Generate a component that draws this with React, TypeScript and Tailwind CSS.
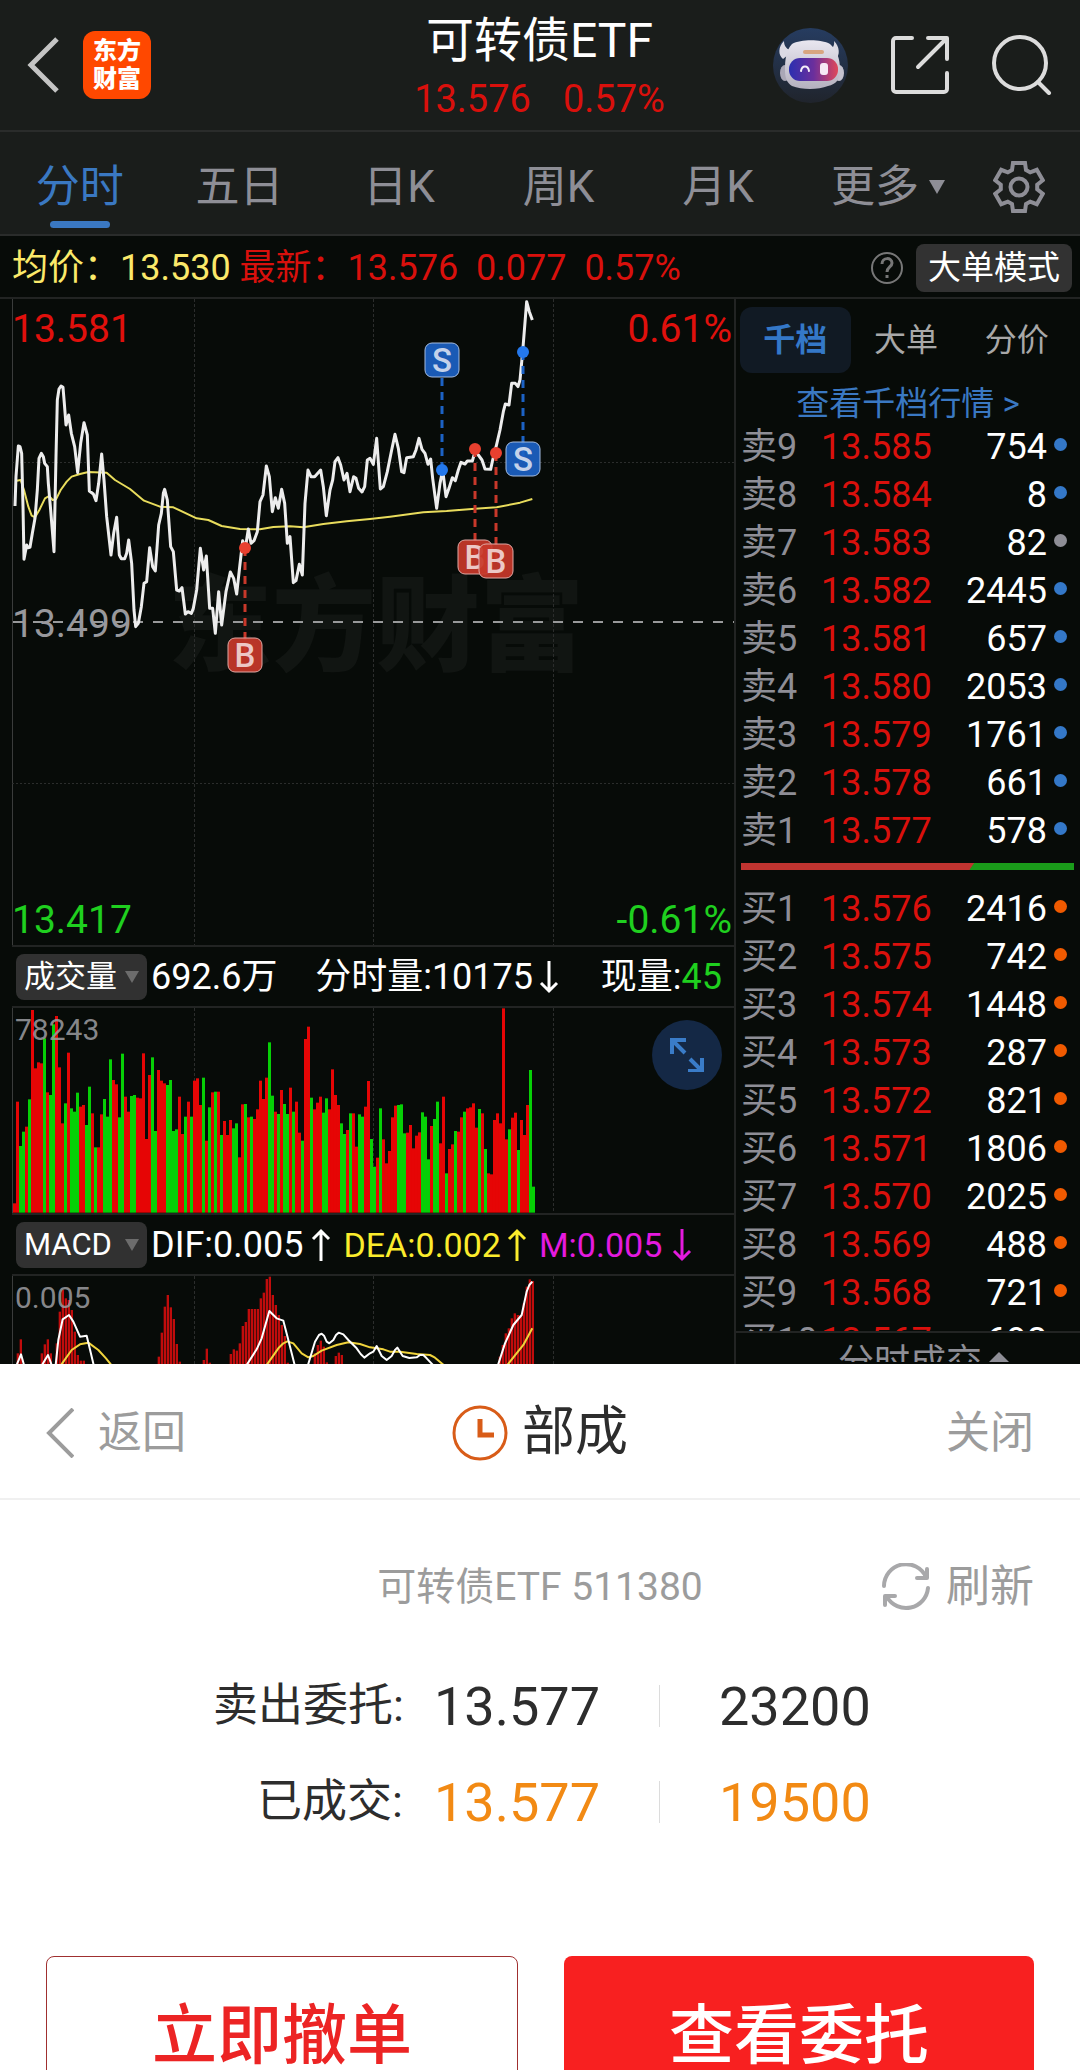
import { useState } from "react";

const PERIODS = ["分时", "五日", "日K", "周K", "月K"];
const BOOK_TABS = ["千档", "大单", "分价"];

// chart series are stored on a grid three times finer than the drawing
const PRICE =
  "45,648 48,560 55,468 60,470 65,490 69,650 72,808 80,765 84,773 90,772 97,730 105,685 112,600 117,505 124,490 130,500 134,520 142,530 145,580 152,660 162,785 168,500 172,330 177,297 183,288 189,292 193,340 198,405 206,375 214,430 224,470 233,548 242,460 252,398 262,435 268,603 280,612 288,632 296,580 305,492 312,570 320,680 333,795 341,730 350,682 358,795 364,806 374,806 380,790 386,750 395,820 402,960 407,1010 415,1000 424,950 432,880 440,875 449,773 458,830 466,843 476,705 484,670 490,610 494,598 502,630 512,770 520,785 530,900 538,903 546,893 556,972 564,965 574,970 580,955 590,900 601,775 611,840 619,798 629,955 638,955 646,1030 656,905 665,1005 678,905 691,846 701,865 710,912 718,840 728,752 736,775 745,717 753,760 762,752 772,725 780,635 789,615 799,528 808,560 817,665 826,623 835,655 845,598 854,640 862,760 870,740 880,878 888,872 898,823 907,855 915,640 924,540 933,560 944,560 962,540 970,590 979,677 990,600 998,570 1005,515 1014,503 1022,525 1032,570 1041,550 1050,605 1061,560 1068,565 1076,595 1086,606 1094,590 1102,510 1110,505 1120,523 1130,445 1141,597 1150,590 1162,545 1175,480 1185,433 1195,475 1205,545 1212,548 1220,503 1240,500 1248,480 1257,445 1266,478 1275,490 1284,523 1292,507 1298,565 1310,655 1320,580 1328,540 1338,620 1347,595 1357,563 1366,572 1375,540 1383,517 1395,522 1402,513 1417,513 1426,482 1435,495 1446,510 1455,537 1472,538 1478,510 1490,463 1500,420 1510,365 1516,342 1527,345 1535,280 1546,280 1554,290 1560,270 1568,185 1580,35 1588,65 1597,90";

const AVERAGE =
  "50,572 62,570 72,600 85,650 95,677 105,682 118,660 135,625 147,618 158,630 168,628 182,600 200,575 215,560 240,552 265,546 320,548 345,570 390,597 432,632 480,650 520,652 590,685 625,690 665,708 720,717 780,718 820,711 870,709 910,712 970,702 1040,694 1110,687 1170,680 1270,667 1340,663 1425,656 1490,652 1560,638 1597,627";

// r = up bar, g = down bar, the number is the top of the bar
const VOLUME =
  "r820 r515 g648 g605 r590 g508 r240 r415 r397 r400 g325 r487 g495 g283 r258 r412 r580 g520 r368 g535 g545 g488 r530 r525 g585 g470 r550 g652 r652 r553 g507 g560 g388 r450 r463 g562 g371 r500 r545 g498 g495 r503 r505 r370 r627 r435 g382 g603 r420 r452 r460 g465 g450 g603 g598 r500 r612 g560 r515 g560 r452 r445 r525 g443 r632 g532 r487 g485 r485 g615 r573 r615 r570 g595 g580 r682 r523 g522 r562 g560 r567 r538 r452 r507 r443 g337 g497 r545 g552 r480 g522 g552 r473 g545 r515 r608 g632 r327 r290 g503 r538 r518 r500 g548 g505 r538 r418 r495 r525 g580 g612 r600 g550 r550 r650 g553 g560 r530 r453 g627 g710 r683 g535 r628 r700 r663 r562 r527 g525 g523 g610 r608 r585 r655 r617 r607 g547 g560 g688 r588 g567 g515 r640 r500 g730 r657 r643 g603 r605 r562 g545 r535 r532 r520 r593 g537 r550 g657 r730 r733 r570 r550 r580 r235 r628 g598 r563 r548 g660 r570 r615 r525 g420 g770";

const MACD_BARS =
  "54,1270 63,1228 126,1270 135,1243 144,1228 153,1270 171,1240 180,1145 189,1080 198,1105 207,1110 216,1140 225,1205 234,1275 243,1292 252,1292 477,1280 486,1208 495,1130 504,1095 513,1132 522,1167 531,1242 540,1295 612,1290 621,1256 630,1298 693,1272 702,1258 711,1262 720,1240 729,1188 738,1176 747,1137 756,1137 765,1137 774,1137 783,1105 792,1088 801,1047 810,1040 819,1095 828,1125 837,1155 846,1185 855,1218 864,1298 945,1270 954,1245 963,1232 972,1250 981,1297 1008,1278 1017,1268 1026,1275 1500,1280 1509,1245 1518,1210 1527,1195 1536,1165 1545,1150 1554,1155 1563,1155 1572,1120 1581,1070 1590,1048 1599,1053";

const DIF = [
  "50,1305 63,1273 72,1305",
  "126,1305 144,1275 155,1305",
  "167,1305 175,1230 188,1168 207,1155 220,1175 240,1220 260,1217 268,1250 281,1305",
  "740,1305 770,1258 785,1225 808,1143 830,1165 850,1172 865,1230 884,1305",
  "924,1305 945,1235 957,1215 965,1211 972,1217 980,1235 988,1240 1000,1230 1008,1215 1016,1208 1030,1213 1045,1230 1070,1255 1082,1272 1093,1283 1110,1270 1120,1265 1130,1248 1145,1278 1160,1290 1175,1278 1185,1260 1192,1253 1208,1278 1228,1284 1250,1282 1260,1275 1270,1275 1280,1285 1299,1305",
  "1494,1305 1515,1240 1540,1185 1565,1155 1580,1085 1588,1065 1597,1055",
];

const DEA = [
  "183,1305 215,1260 240,1243 265,1238 295,1260 318,1285 334,1305",
  "800,1305 835,1255 850,1240 862,1234 880,1240 905,1270 925,1282 940,1278 965,1262 1010,1245 1045,1237 1080,1242 1110,1252 1150,1258 1170,1265 1200,1265 1250,1272 1290,1275 1305,1283 1331,1305",
  "1522,1305 1570,1245 1597,1195",
];

const MARKERS = [
  { side: "B", x: 245, y: 655, dot: 548 },
  { side: "S", x: 442, y: 360, dot: 470 },
  { side: "B", x: 475, y: 557, dot: 449 },
  { side: "B", x: 496, y: 561, dot: 453 },
  { side: "S", x: 523, y: 459, dot: 352 },
];

interface Level {
  label: string;
  price: string;
  amount: number;
  dot: string;
}

const BLUE = "bg-[#3478c8]";
const ORANGE = "bg-[#f05a00]";

const ASKS: Level[] = [
  { label: "卖9", price: "13.585", amount: 754, dot: BLUE },
  { label: "卖8", price: "13.584", amount: 8, dot: BLUE },
  { label: "卖7", price: "13.583", amount: 82, dot: "bg-[#8e8e96]" },
  { label: "卖6", price: "13.582", amount: 2445, dot: BLUE },
  { label: "卖5", price: "13.581", amount: 657, dot: BLUE },
  { label: "卖4", price: "13.580", amount: 2053, dot: BLUE },
  { label: "卖3", price: "13.579", amount: 1761, dot: BLUE },
  { label: "卖2", price: "13.578", amount: 661, dot: BLUE },
  { label: "卖1", price: "13.577", amount: 578, dot: BLUE },
];

const BIDS: Level[] = [
  { label: "买1", price: "13.576", amount: 2416, dot: ORANGE },
  { label: "买2", price: "13.575", amount: 742, dot: ORANGE },
  { label: "买3", price: "13.574", amount: 1448, dot: ORANGE },
  { label: "买4", price: "13.573", amount: 287, dot: ORANGE },
  { label: "买5", price: "13.572", amount: 821, dot: ORANGE },
  { label: "买6", price: "13.571", amount: 1806, dot: ORANGE },
  { label: "买7", price: "13.570", amount: 2025, dot: ORANGE },
  { label: "买8", price: "13.569", amount: 488, dot: ORANGE },
  { label: "买9", price: "13.568", amount: 721, dot: ORANGE },
  { label: "买10", price: "13.567", amount: 698, dot: ORANGE },
];

function Robot() {
  return (
    <svg viewBox="0 0 75 75" className="size-[75px]">
      <defs>
        <linearGradient id="robot-bg" x1="0" y1="0" x2="0" y2="1">
          <stop offset="0" stopColor="#263c60" />
          <stop offset="1" stopColor="#20242c" />
        </linearGradient>
        <linearGradient id="robot-face" x1="0" y1="0" x2="1" y2="0">
          <stop offset="0" stopColor="#2b2fb0" />
          <stop offset="0.5" stopColor="#6b2f9c" />
          <stop offset="1" stopColor="#e0485a" />
        </linearGradient>
        <linearGradient id="robot-head" x1="0" y1="0" x2="0" y2="1">
          <stop offset="0" stopColor="#e9e7f0" />
          <stop offset="1" stopColor="#b4b0be" />
        </linearGradient>
      </defs>
      <circle cx="37.5" cy="37.5" r="37.5" fill="url(#robot-bg)" />
      <path d="M11 13c-6 6-6 14-1 18l11-9c-6 1-10-3-10-9zM61 13c6 6 6 14 2 18l-11-9c6 1 10-3 9-9z" fill="#dcdae4" />
      <ellipse cx="12" cy="45" rx="5" ry="8" fill="#aaa7b6" />
      <ellipse cx="66" cy="45" rx="5" ry="8" fill="#c5c2ce" />
      <path d="M19 16c9-5 29-5 38 0 7 6 10 15 10 25 0 11-4 15-12 17-10 4-26 4-36 0-5-3-7-8-7-16 0-10 1-20 7-26z" fill="url(#robot-head)" />
      <rect x="16" y="30" width="49" height="23" rx="11" fill="url(#robot-face)" />
      <path d="M28 43c1-6 7-6 8 0" fill="none" stroke="#f4eef8" strokeWidth="2" strokeLinecap="round" />
      <rect x="47" y="35" width="8" height="12" rx="3" fill="#f6e8f4" />
      <rect x="30" y="22" width="21" height="4" rx="2" fill="#d8a680" />
    </svg>
  );
}

function Header() {
  return (
    <header className="flex h-[132px] shrink-0 items-center justify-between border-b-2 border-[#2a2c2b] bg-[#1a1d1b] pr-7 pl-[27px]">
      <div className="flex flex-1 items-center gap-6">
        <button aria-label="返回上一页">
          <svg viewBox="0 0 32 56" className="h-14 w-8" fill="none" stroke="#c4c4c4" strokeWidth="5">
            <path d="M30 2L4 28l26 26" />
          </svg>
        </button>
        <div className="grid size-[68px] place-content-center rounded-xl bg-[#ff4800] text-center text-2xl leading-7 font-black text-white">
          <span>东方</span>
          <span>财富</span>
        </div>
      </div>
      <div className="flex flex-col items-center pt-2">
        <h1 className="text-5xl leading-[60px] text-white">可转债ETF</h1>
        <p className="flex gap-8 text-[38px] leading-[56px] text-[#d9100c]">
          <span>13.576</span>
          <span>0.57%</span>
        </p>
      </div>
      <div className="flex flex-1 items-center justify-end gap-[43px]">
        <button aria-label="智能助手">
          <Robot />
        </button>
        <button aria-label="分享">
          <svg viewBox="0 0 58 58" className="size-[58px]" fill="none" stroke="#dcdcdc" strokeWidth="4" strokeLinecap="round" strokeLinejoin="round">
            <path d="M21 2H5a3 3 0 0 0-3 3v48a3 3 0 0 0 3 3h48a3 3 0 0 0 3-3V37" />
            <path d="M37 2h19v21M54 4L27 31" />
          </svg>
        </button>
        <button aria-label="搜索">
          <svg viewBox="0 0 60 60" className="size-[60px]" fill="none" stroke="#dcdcdc" strokeWidth="4" strokeLinecap="round">
            <circle cx="28" cy="28" r="26" />
            <path d="M46 47l11 11" />
          </svg>
        </button>
      </div>
    </header>
  );
}

function Periods() {
  const [active, setActive] = useState("分时");

  return (
    <nav className="flex h-[104px] shrink-0 border-b-2 border-[#2a2c2b] bg-[#1a1d1b] pt-2 text-[44px] text-[#8e8e96]">
      {PERIODS.map((name) => (
        <button
          key={name}
          onClick={() => setActive(name)}
          className={
            name === active
              ? "relative flex-1 text-[#3a78c2] after:absolute after:bottom-1.5 after:left-1/2 after:h-[7px] after:w-[60px] after:-translate-x-1/2 after:rounded-full after:bg-[#3a78c2]"
              : "flex-1"
          }
        >
          {name}
        </button>
      ))}
      <button className="flex w-[180px] items-center justify-center gap-2.5">
        更多
        <svg viewBox="0 0 16 14" className="h-3.5 w-4" fill="#8e8e96">
          <path d="M0 0h16L8 14z" />
        </svg>
      </button>
      <button aria-label="设置" className="mr-5 flex w-[82px] items-center justify-center">
        <svg viewBox="0 0 52 52" className="size-[52px]" fill="none" stroke="#8e8e96" strokeWidth="4">
          <circle cx="26" cy="26" r="8.500" />
          <path d="M20 2H32L33 9 37.200 11.400 43.800 8.800 49.800 19.200 44.200 23.600V28.400L49.800 32.800 43.800 43.200 37.200 40.600 33 43 32 50H20L19 43 14.800 40.600 8.200 43.200 2.200 32.800 7.800 28.400V23.600L2.200 19.200 8.200 8.800 14.800 11.400 19 9z" />
        </svg>
      </button>
    </nav>
  );
}

function QuoteBar() {
  return (
    <div className="flex h-[63px] shrink-0 items-center border-b-2 border-[#222423] pt-0.5 pr-2 pl-3">
      <p className="flex-1 text-4xl whitespace-pre text-[#d9100c]">
        <span className="text-[#fbe96a]">均价：13.530</span> 最新：13.576{"  "}0.077{"  "}0.57%
      </p>
      <button aria-label="说明" className="mr-3">
        <svg viewBox="0 0 34 34" className="size-[34px]" fill="none" stroke="#777" strokeWidth="2">
          <circle cx="17" cy="17" r="15" />
          <path d="M12 13c0-7 10-7 10-1 0 4-5 4-5 9" strokeWidth="3" />
          <path d="M17 24v3" strokeWidth="3" />
        </svg>
      </button>
      <button className="h-12 rounded-lg bg-[#323232] px-3 text-[33px] leading-none text-white">大单模式</button>
    </div>
  );
}

function GridLines({ top, bottom }: { top: number; bottom: number }) {
  return (
    <g stroke="#2b2d2c" strokeWidth="1">
      <path d={`M194.500 ${top}V${bottom}M373.500 ${top}V${bottom}M553.500 ${top}V${bottom}`} strokeDasharray="3 2" />
      <path d={`M12.500 ${top}V${bottom}`} stroke="#3a3c3b" />
    </g>
  );
}

function PriceChart() {
  return (
    <svg viewBox="12 299 722 646" className="block w-full" fontFamily="Roboto, sans-serif">
      <text x="168" y="663" fontSize="104" fontWeight="900" fill="#111512" fontFamily="Noto Sans CJK SC, sans-serif">
        东方财富
      </text>
      <GridLines top={299} bottom={945} />
      <path d="M12 462.500H734M12 783.500H734" stroke="#2b2d2c" strokeDasharray="2 2" />
      <path d="M13 622H734" stroke="#98999a" strokeWidth="2" strokeDasharray="10 10" />
      <g fontSize="39">
        <text x="12" y="342" fill="#e0100c">13.581</text>
        <text x="12" y="637" fill="#98989c">13.499</text>
        <text x="12" y="933" fill="#1fd01f">13.417</text>
        <text x="732" y="342" fill="#e0100c" textAnchor="end">0.61%</text>
        <text x="732" y="933" fill="#1fd01f" textAnchor="end">-0.61%</text>
      </g>
      <g transform="translate(0 290) scale(0.33333)" fill="none" strokeLinejoin="round">
        <polyline points={AVERAGE} stroke="#e8dc5c" strokeWidth="6" />
        <polyline points={PRICE} stroke="#ededed" strokeWidth="9" />
      </g>
      {MARKERS.map(({ side, x, y, dot }) => {
        const color = side === "B" ? "#c8382a" : "#1c62c4";
        return (
          <g key={`${side}${x}`}>
            <path d={`M${x} ${dot}V${y}`} stroke={color} strokeWidth="3" strokeDasharray="8 6" />
            <circle cx={x} cy={dot} r="6" fill={side === "B" ? "#e8402f" : "#2478ec"} />
            <rect x={x - 17} y={y - 17} width="34" height="34" rx="7" fill={color} fillOpacity="0.92" stroke={side === "B" ? "#e0a8a4" : "#a4bce0"} />
            <text x={x} y={y + 12} fontSize="33" fontWeight="500" fill={side === "B" ? "#ecc8c6" : "#c4d2ea"} textAnchor="middle">
              {side}
            </text>
          </g>
        );
      })}
    </svg>
  );
}

function VolumeChart() {
  return (
    <svg viewBox="12 1008 722 205" className="block w-full" fontFamily="Roboto, sans-serif">
      <GridLines top={1008} bottom={1213} />
      <g transform="translate(0 930) scale(0.33333)">
        {VOLUME.split(" ").map((bar, i) => {
          const top = Number(bar.slice(1));
          return (
            <rect key={i} x={39 + i * 9} y={top} width="9" height={848 - top} fill={bar[0] === "r" ? "#e60505" : "#06d006"} />
          );
        })}
      </g>
      <text x="15" y="1040" fontSize="30" fill="#98989c" fillOpacity="0.9">
        78243
      </text>
    </svg>
  );
}

function MacdChart() {
  return (
    <svg viewBox="12 1276 722 88" className="block w-full" fontFamily="Roboto, sans-serif">
      <GridLines top={1276} bottom={1364} />
      <g transform="translate(0 930) scale(0.33333)" fill="none" strokeLinejoin="round">
        {MACD_BARS.split(" ").map((bar) => {
          const [x, top] = bar.split(",").map(Number);
          return <rect key={x} x={x - 4} y={top} width="7" height={1305 - top} fill="#c00c0c" />;
        })}
        {DEA.map((points) => (
          <polyline key={points} points={points} stroke="#f0d43c" strokeWidth="6" />
        ))}
        {DIF.map((points) => (
          <polyline key={points} points={points} stroke="#fff" strokeWidth="6" />
        ))}
      </g>
      <text x="15" y="1308" fontSize="30" fill="#98989c" fillOpacity="0.9">
        0.005
      </text>
    </svg>
  );
}

function Arrow({ down = false }: { down?: boolean }) {
  return (
    <svg viewBox="0 0 20 34" className="h-[34px] w-5" fill="none" stroke="currentColor" strokeWidth="3">
      <path d={down ? "M10 1v30M2 23l8 8 8-8" : "M10 33V3M2 11l8-8 8 8"} />
    </svg>
  );
}

function IndicatorButton({ name }: { name: string }) {
  return (
    <button className="flex h-[46px] w-[131px] items-center justify-between rounded-lg bg-[#313131] px-2 text-[31px] leading-none">
      {name}
      <svg viewBox="0 0 14 12" className="h-3 w-3.5 shrink-0" fill="#6c6c6c">
        <path d="M0 0h14L7 12z" />
      </svg>
    </button>
  );
}

function Charts() {
  return (
    <div className="min-w-0 flex-1 pl-3">
      <PriceChart />
      <div className="flex h-[63px] items-center justify-between border-y-2 border-[#222423] pr-3 pl-1 text-4xl leading-none whitespace-nowrap text-white">
        <div className="flex items-center gap-1">
          <IndicatorButton name="成交量" />
          <span>692.6万</span>
        </div>
        <span className="flex items-center gap-1.5 pr-1">
          分时量:10175
          <Arrow down />
        </span>
        <span>
          现量:<span className="text-[#1fd01f]">45</span>
        </span>
      </div>
      <div className="relative">
        <VolumeChart />
        <button aria-label="全屏" className="absolute top-3 right-3 grid size-[70px] place-items-center rounded-full bg-[#142845]">
          <svg viewBox="0 0 34 34" className="size-[34px]" fill="none" stroke="#3a7cc8" strokeWidth="4">
            <path d="M2 16V2h14M3 3l12 12M32 20v13H18M31 32L20 21" />
          </svg>
        </button>
      </div>
      <div className="flex h-[63px] items-center gap-3 border-y-2 border-[#222423] pl-1 text-[34px] leading-none whitespace-nowrap text-white">
        <div className="flex items-center gap-1">
          <IndicatorButton name="MACD" />
          <span className="flex items-center gap-2 text-4xl leading-none">
            DIF:0.005
            <Arrow />
          </span>
        </div>
        <span className="flex items-center gap-1.5 text-[#fbec2c]">
          DEA:0.002
          <Arrow />
        </span>
        <span className="flex items-center gap-2.5 text-[#e41ade]">
          M:0.005
          <Arrow down />
        </span>
      </div>
      <MacdChart />
    </div>
  );
}

function Levels({ rows }: { rows: Level[] }) {
  return (
    <table className="w-full text-4xl leading-none whitespace-nowrap">
      <tbody>
        {rows.map((row) => (
          <tr key={row.label} className="h-12">
            <th className="w-20 max-w-20 p-0 text-left font-normal text-[#8e8e96]">{row.label}</th>
            <td className="p-0 text-[#d9100c]">{row.price}</td>
            <td className="p-0 text-right text-white">{row.amount}</td>
            <td className="w-5 p-0 pb-1.5">
              <span className={`ml-auto block size-[13px] rounded-full ${row.dot}`} />
            </td>
          </tr>
        ))}
      </tbody>
    </table>
  );
}

function OrderBook() {
  const [tab, setTab] = useState("千档");

  return (
    <aside className="flex w-[346px] shrink-0 flex-col border-l-2 border-[#222423]">
      <div className="mr-2 ml-1 mt-2 flex h-[66px] text-[32px]">
        {BOOK_TABS.map((name) => (
          <button
            key={name}
            onClick={() => setTab(name)}
            className={
              name === tab
                ? "flex-1 rounded-xl bg-[#111a24] font-bold text-[#3478c8]"
                : "flex-1 text-[#a8a8a8]"
            }
          >
            {name}
          </button>
        ))}
      </div>
      <a href="#levels" className="mt-0.5 h-12 text-center text-[33px] leading-[58px] text-[#3a78c2]">
        查看千档行情 &gt;
      </a>
      <div id="levels" className="pr-[13px] pl-[5px]">
        <Levels rows={ASKS} />
      </div>
      <div className="mr-1.5 ml-[5px] mt-2 mb-[15px] flex h-[7px] bg-[#1a9c1a]">
        <div className="w-[70%] bg-[#c03430] [clip-path:polygon(0_0,100%_0,98%_100%,0_100%)]" />
      </div>
      <div className="h-[446px] overflow-hidden pr-[13px] pl-[5px]">
        <Levels rows={BIDS} />
      </div>
      <div className="h-[31px] overflow-hidden border-t-2 border-[#222423] pl-8">
        <button className="mx-auto flex items-center gap-1.5 text-4xl leading-[60px] text-[#8e8e96]">
          分时成交
          <svg viewBox="0 0 22 22" className="size-[22px]" fill="#8e8e96">
            <path d="M11 0l11 11v11H0V11z" />
          </svg>
        </button>
      </div>
    </aside>
  );
}

function OrderSheet() {
  return (
    <section className="shrink-0 bg-white">
      <div className="flex h-[136px] items-center border-b-2 border-[#f0f0f0] px-[46px] pt-1 text-[44px] text-[#9c9c9c]">
        <button className="flex flex-1 items-center gap-6">
          <svg viewBox="0 0 28 50" className="h-[50px] w-7" fill="none" stroke="#9c9c9c" strokeWidth="4">
            <path d="M27 1L3 25l24 24" />
          </svg>
          返回
        </button>
        <h2 className="flex items-center gap-3.5 text-[53px] text-[#2d2d2d]">
          <svg viewBox="0 0 56 56" className="size-14" fill="none" stroke="#d85c18" strokeWidth="3">
            <circle cx="28" cy="28" r="26" />
            <path d="M28 14v16h14" strokeWidth="5" />
          </svg>
          部成
        </h2>
        <button className="flex-1 text-right">关闭</button>
      </div>
      <div className="mt-[54px] grid h-16 grid-cols-[1fr_auto_1fr] items-center px-[46px] text-[#9c9c9c]">
        <p className="col-start-2 text-[39px]">可转债ETF 511380</p>
        <button className="flex items-center justify-end gap-4 text-[44px] whitespace-nowrap">
          <svg viewBox="0 0 48 48" className="size-12" fill="none" stroke="#a8a8aa" strokeWidth="4" strokeLinecap="round" strokeLinejoin="round">
            <path d="M2 23A22 22 0 0 1 44 14M45 6v9H35" />
            <path d="M46 25A22 22 0 0 1 5 34M3 42v-9h10" />
          </svg>
          刷新
        </button>
      </div>
      <dl className="mt-10 flex flex-col items-center text-[54px] text-[#2d2d2d]">
        <div className="grid h-24 grid-cols-[190px_166px_1px_204px] items-center gap-x-[31px]">
          <dt className="text-right text-[45px] whitespace-nowrap">卖出委托:</dt>
          <dd>13.577</dd>
          <dd className="ml-7 h-[42px] w-px bg-[#dcdcdc]" />
          <dd className="pl-14">23200</dd>
        </div>
        <div className="grid h-24 grid-cols-[190px_166px_1px_204px] items-center gap-x-[31px]">
          <dt className="text-right text-[45px] whitespace-nowrap">已成交:</dt>
          <dd className="text-[#f28a14]">13.577</dd>
          <dd className="ml-7 h-[42px] w-px bg-[#dcdcdc]" />
          <dd className="pl-14 text-[#f28a14]">19500</dd>
        </div>
      </dl>
      <div className="mt-[106px] flex gap-[46px] px-[46px] text-[65px] leading-none font-medium">
        <button className="h-[160px] flex-1 rounded-lg border border-[#a03030] text-[#ec2424]">立即撤单</button>
        <button className="h-[160px] flex-1 rounded-lg bg-[#f82020] text-white">查看委托</button>
      </div>
    </section>
  );
}

export default function App() {
  return (
    <div className="flex h-screen flex-col overflow-hidden bg-[#070b08] font-['Roboto','Noto_Sans_CJK_SC',sans-serif]">
      <Header />
      <Periods />
      <QuoteBar />
      <main className="flex shrink-0">
        <Charts />
        <OrderBook />
      </main>
      <OrderSheet />
    </div>
  );
}
